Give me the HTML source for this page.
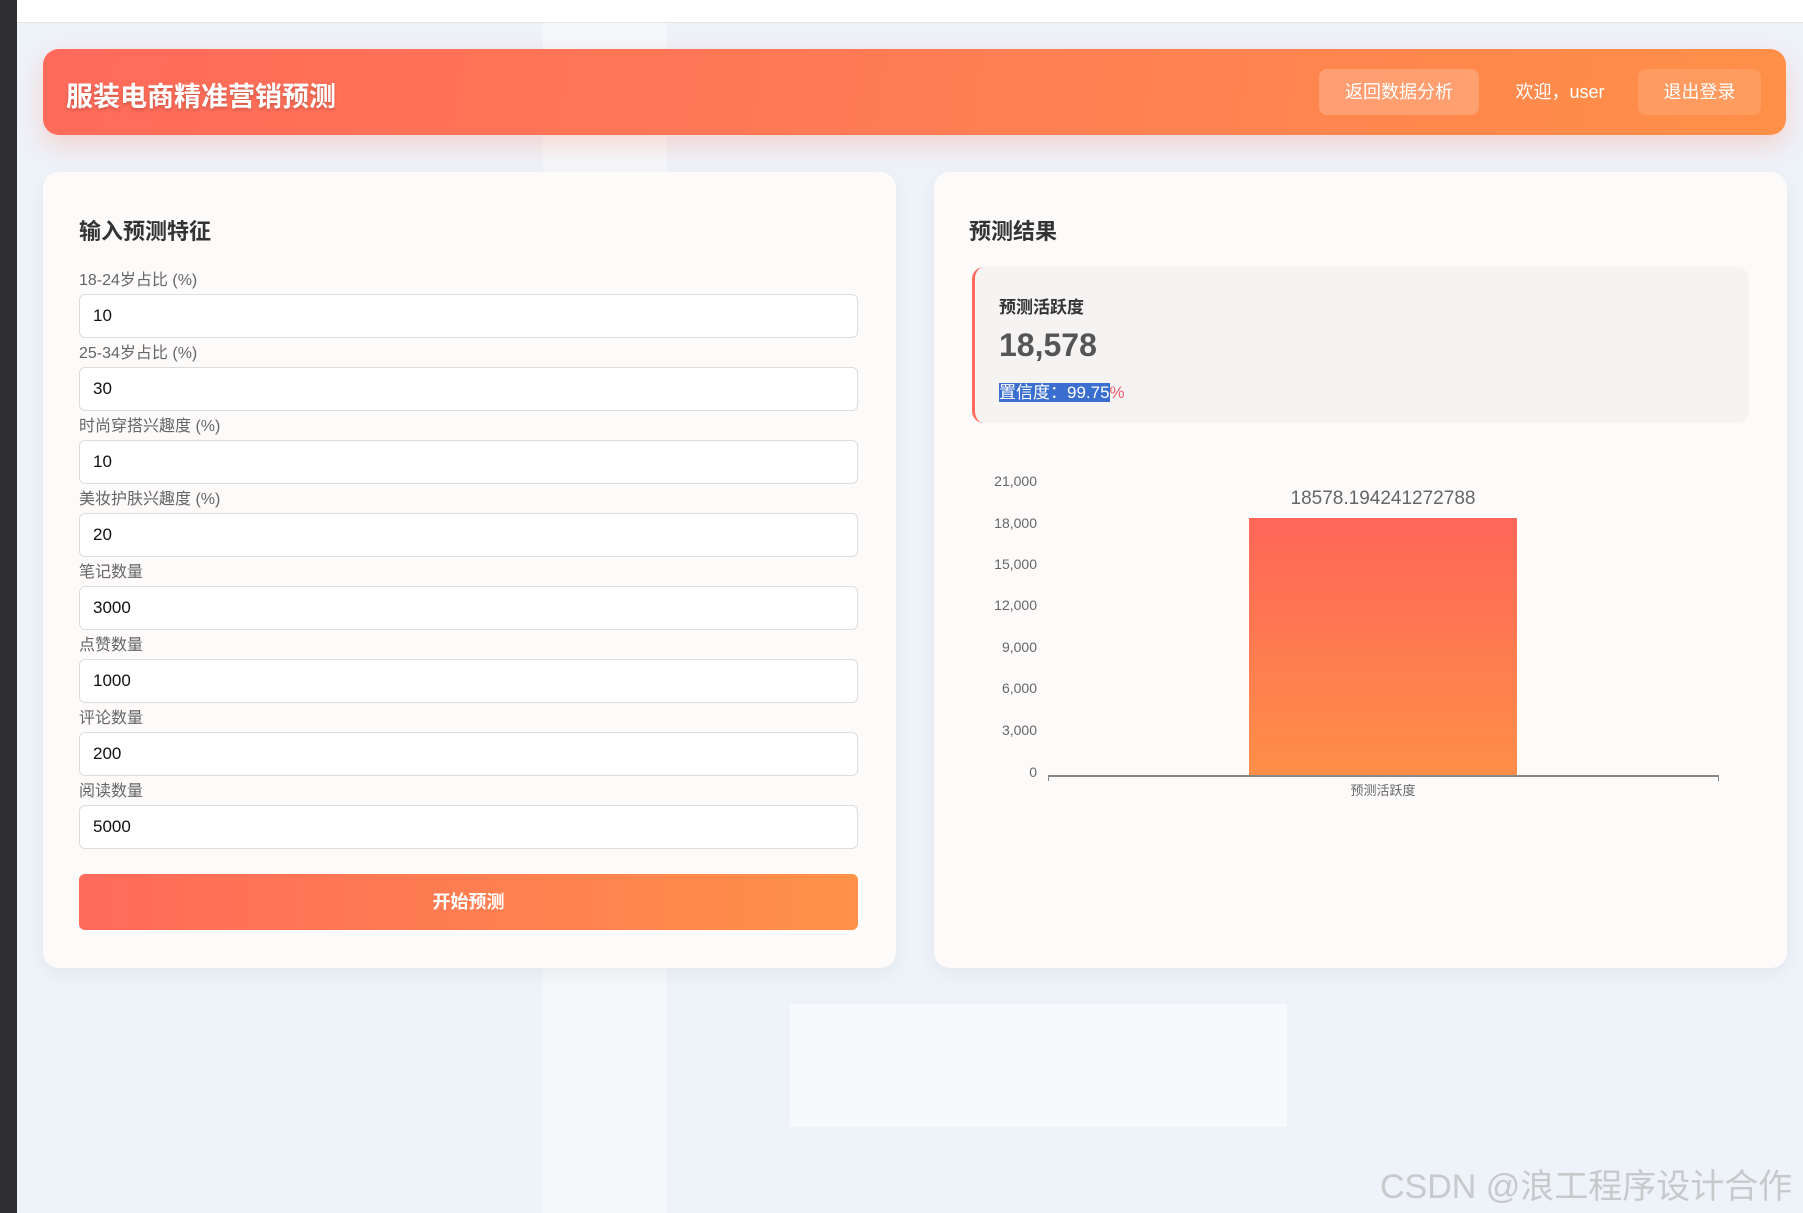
<!DOCTYPE html>
<html><head><meta charset="utf-8"><style>
*{box-sizing:border-box;margin:0;padding:0}
body{width:1803px;height:1213px;overflow:hidden;background:#eef2f9;font-family:"Liberation Sans","Noto Sans CJK SC",sans-serif;position:relative}
.abs{position:absolute}
.top{left:0;top:0;width:1803px;height:23px;background:#fff;border-bottom:1px solid #e5e5e5}
.strip{left:0;top:0;width:17px;height:1213px;background:#2f2f33}
.header{left:43px;top:49px;width:1743px;height:86px;border-radius:16px;background:linear-gradient(100deg,#ff6a5a 0%,#ff7a55 45%,#ff9048 100%);box-shadow:0 10px 25px rgba(255,120,80,.25)}
.header h1{position:absolute;left:23px;top:26px;color:#fff;font-size:27px;font-weight:bold;text-shadow:0 2px 3px rgba(0,0,0,.2)}
.btn{position:absolute;top:20px;height:46px;border-radius:8px;color:#fff;font-size:18px;line-height:46px;text-align:center}
.card{top:172px;width:853px;height:796px;background:#fdfafa;border-radius:16px;box-shadow:0 6px 20px rgba(0,0,0,.05)}
.h2{font-size:22px;font-weight:bold;color:#333}
.lbl{position:absolute;left:36px;font-size:16px;color:#666}
.inp{position:absolute;left:36px;width:779px;height:44px;border:1px solid #dcdcdc;border-radius:6px;background:#fff;font-size:17px;color:#111;padding-left:13px;line-height:42px}
.yl{position:absolute;right:0;width:60px;text-align:right;font-size:14px;color:#666}
</style></head><body>
<div class="abs" style="left:543px;top:23px;width:124px;height:1190px;background:#f5f7fb"></div>
<div class="abs" style="left:790px;top:1004px;width:497px;height:123px;background:#f8f9fc"></div>
<div class="abs top"></div>
<div class="abs strip"></div>
<div class="abs header"><h1>服装电商精准营销预测</h1>
<div class="btn" style="left:1276px;width:160px;background:rgba(255,255,255,.2)">返回数据分析</div>
<div class="btn" style="left:1462px;width:110px">欢迎，user</div>
<div class="btn" style="left:1595px;width:123px;background:rgba(255,255,255,.12)">退出登录</div>
</div>
<div class="abs card" style="left:43px">
<div class="h2 abs" style="left:36px;top:42px">输入预测特征</div>
<div class="lbl" style="top:94px">18-24岁占比 (%)</div><div class="inp" style="top:122px">10</div>
<div class="lbl" style="top:167px">25-34岁占比 (%)</div><div class="inp" style="top:195px">30</div>
<div class="lbl" style="top:240px">时尚穿搭兴趣度 (%)</div><div class="inp" style="top:268px">10</div>
<div class="lbl" style="top:313px">美妆护肤兴趣度 (%)</div><div class="inp" style="top:341px">20</div>
<div class="lbl" style="top:386px">笔记数量</div><div class="inp" style="top:414px">3000</div>
<div class="lbl" style="top:459px">点赞数量</div><div class="inp" style="top:487px">1000</div>
<div class="lbl" style="top:532px">评论数量</div><div class="inp" style="top:560px">200</div>
<div class="lbl" style="top:605px">阅读数量</div><div class="inp" style="top:633px">5000</div>
<div class="abs" style="left:36px;top:702px;width:779px;height:56px;border-radius:6px;background:linear-gradient(90deg,#ff6a5a,#ff9148);color:#fff;font-size:18px;font-weight:bold;text-align:center;line-height:56px">开始预测</div>
</div>
<div class="abs card" style="left:934px">
<div class="h2 abs" style="left:35px;top:42px">预测结果</div>
<div class="abs" style="left:38px;top:95px;width:777px;height:156px;background:#f6f3f3;border-radius:12px;border-left:3px solid #ff6a5a">
<div class="abs" style="left:24px;top:26px;font-size:17px;font-weight:bold;color:#333">预测活跃度</div>
<div class="abs" style="left:24px;top:60px;font-size:32px;font-weight:bold;color:#555">18,578</div>
<div class="abs" style="left:24px;top:111px;font-size:17px;color:#fff"><span style="background:#3a6fd0">置信度：99.75</span><span style="color:#f06070">%</span></div>
</div>
<div class="abs" style="left:0;top:0;width:103px;height:796px">
<div class="yl" style="top:301px">21,000</div>
<div class="yl" style="top:343px">18,000</div>
<div class="yl" style="top:384px">15,000</div>
<div class="yl" style="top:425px">12,000</div>
<div class="yl" style="top:467px">9,000</div>
<div class="yl" style="top:508px">6,000</div>
<div class="yl" style="top:550px">3,000</div>
<div class="yl" style="top:592px">0</div>
</div>
<div class="abs" style="left:114px;top:603px;width:671px;height:2px;background:#888"></div>
<div class="abs" style="left:114px;top:603px;width:1px;height:6px;background:#888"></div>
<div class="abs" style="left:784px;top:603px;width:1px;height:6px;background:#888"></div>
<div class="abs" style="left:315px;top:346px;width:268px;height:257px;background:linear-gradient(#ff6658,#ff8f48)"></div>
<div class="abs" style="left:315px;top:316px;width:268px;text-align:center;font-size:19px;color:#666">18578.194241272788</div>
<div class="abs" style="left:315px;top:608px;width:268px;text-align:center;font-size:13px;color:#666">预测活跃度</div>
</div>
<div class="abs" style="left:1380px;top:1159px;font-size:34px;color:rgba(190,190,190,.8)">CSDN @浪工程序设计合作</div>
</body></html>
